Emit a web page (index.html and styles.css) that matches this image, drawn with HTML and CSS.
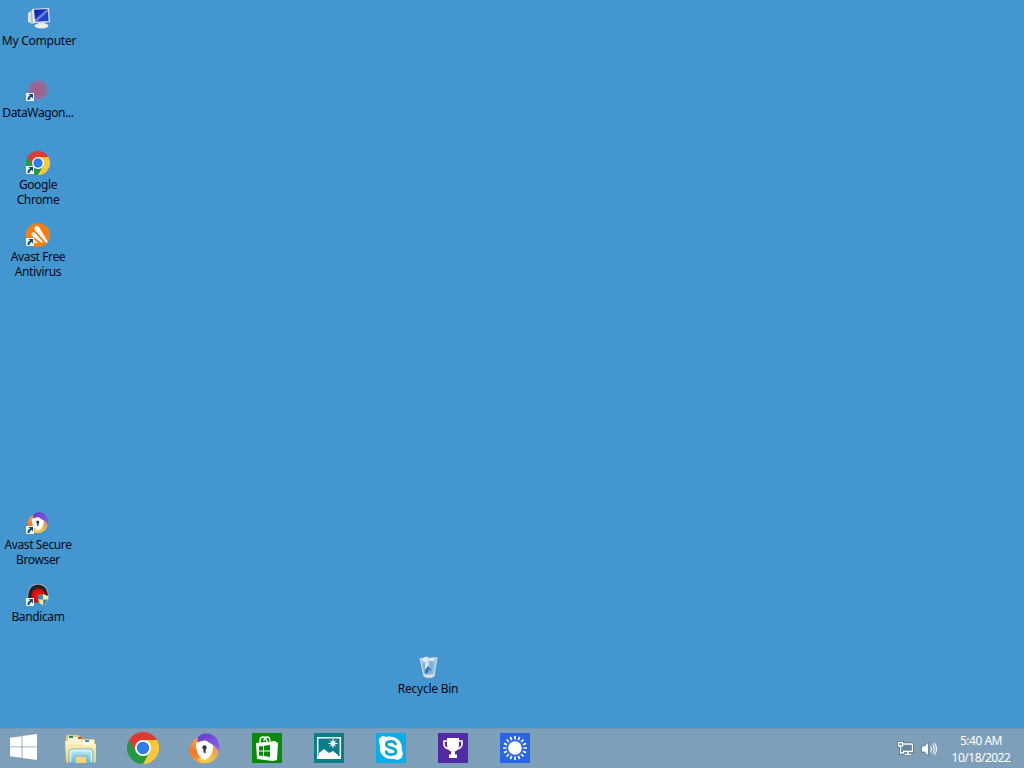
FILE: index.html
```html
<!DOCTYPE html>
<html lang="en">
<head>
<meta charset="utf-8">
<title>Desktop</title>
<link rel="stylesheet" href="styles.css">
</head>
<body>
<svg width="0" height="0" class="defs" aria-hidden="true">
  <defs>
    <linearGradient id="screen" x1="0" y1="0" x2="1" y2="1"><stop offset="0" stop-color="#0d1c98"/><stop offset=".4" stop-color="#1430b8"/><stop offset=".52" stop-color="#7f9ae8"/><stop offset=".6" stop-color="#2343c8"/><stop offset="1" stop-color="#1c3cc4"/></linearGradient>
    <linearGradient id="folder" x1="0" y1="0" x2="0" y2="1"><stop offset="0" stop-color="#fdf3bf"/><stop offset="1" stop-color="#f1cf74"/></linearGradient>
    <linearGradient id="stand" x1="0" y1="0" x2="0" y2="1"><stop offset="0" stop-color="#c9eef8"/><stop offset="1" stop-color="#62b6dc"/></linearGradient>
    <linearGradient id="orange" x1="0" y1="0" x2="0" y2="1"><stop offset="0" stop-color="#ff9c4c"/><stop offset=".6" stop-color="#fa7420"/><stop offset="1" stop-color="#f9a032"/></linearGradient>
    <linearGradient id="yellow" x1="0" y1="1" x2="1" y2="0"><stop offset="0" stop-color="#ffd43c"/><stop offset=".5" stop-color="#f2bb48"/><stop offset="1" stop-color="#d58a68"/></linearGradient>
    <linearGradient id="purple" x1="0" y1="0" x2="1" y2="1"><stop offset="0" stop-color="#643ac8"/><stop offset="1" stop-color="#9060ee"/></linearGradient>
    <radialGradient id="wagon"><stop offset="0" stop-color="#a4608c"/><stop offset=".7" stop-color="#906c9e"/><stop offset="1" stop-color="#7c7fb0" stop-opacity=".35"/></radialGradient>
    <radialGradient id="red"><stop offset="0" stop-color="#ff1c12"/><stop offset="1" stop-color="#c80505"/></radialGradient>
    <symbol id="chrome" viewBox="0 0 48 48">
      <path fill="#e0392f" d="M3.2 12A24 24 0 0 1 44.8 12H24L13.6 30Z"/>
      <path fill="#24983f" d="M3.2 12L13.6 30L24 36H34.4L24 48A24 24 0 0 1 3.2 12Z"/>
      <path fill="#fcc934" d="M44.8 12A24 24 0 0 1 24 48L34.4 30L24 12Z"/>
      <circle cx="24" cy="24" r="12" fill="#fff"/><circle cx="24" cy="24" r="9.3" fill="#2f7de6"/>
    </symbol>
    <symbol id="secure" viewBox="0 0 32 32">
      <path fill="url(#orange)" d="M10 4C2 7-1 17 2 23C5 29 11 32 16 31L12 20Z"/>
      <path fill="url(#yellow)" d="M11 30C21 34 32 27 31 15L24 12L20 24L9 26Z"/>
      <path fill="url(#purple)" d="M9 5C13-1 23-1 28 5C31 9 32 14 31 19C27 11 18 7 9 9Z"/>
      <path fill="#fff" d="M7 10C12 10 14 7 18 8C20 10 23 11 25 13C25 20 22 26 16 28C10 25 7 19 7 10Z"/>
      <circle cx="16" cy="15" r="2.3" fill="#333743"/><path fill="#333743" d="M15 16h2.200v5l-2.200-1z"/>
    </symbol>
    <symbol id="shortcut" viewBox="0 0 8 8">
      <path fill="#f4f7fa" d="M0 0h8v8H0z"/><path fill="#174b83" d="M2.500 1H7v4.400L5.600 4C4.200 4.600 3.700 5.500 3.600 7H1.500C1.400 4.900 2.200 3.500 4 2.500Z"/>
    </symbol>
  </defs>
</svg>
<main class="desktop">
  <div class="item computer">
    <svg viewBox="0 0 24 24"><path fill="#dce1e3" d="M1 6l5-3v14l-5-2z"/><path fill="#a9bdcc" d="M4 3h3v14H4z"/><path fill="#e6e9e8" d="M5 2l17-1 1 14-17 1z"/><path fill="url(#screen)" d="M7 2.800l14-.8.700 12-13.500.8z"/><path fill="#d3d6d2" d="M11 15h7l1 3h-8z"/><ellipse cx="14.500" cy="18.800" rx="7" ry="2.600" fill="#ecece6"/></svg>
    <span>My Computer</span>
  </div>
  <div class="item wagon">
    <svg viewBox="0 0 24 24"><circle cx="12" cy="11" r="10.800" fill="url(#wagon)"/><path d="M5 8q7-6 14 0M5 13q7-6 15 0M9 17q5-4 10-1" fill="none" stroke="#b94c70" stroke-opacity=".35" stroke-width="1.500"/><use href="#shortcut" y="14" width="8" height="8"/></svg>
    <span>DataWagon...</span>
  </div>
  <div class="item google">
    <svg viewBox="0 0 24 24"><use href="#chrome" width="24" height="24"/><use href="#shortcut" y="15" width="8" height="8"/></svg>
    <span>Google<br>Chrome</span>
  </div>
  <div class="item avast">
    <svg viewBox="0 0 24 24"><circle cx="12" cy="12" r="12" fill="#f77f0e"/><path fill="#fff" d="M8.600 4.400C9.800 2.300 12.400 2.500 13.400 4.600L21.200 18c.6 1.500-.4 2.400-1.400 1.300L9.400 7.700C8.500 6.700 8.100 5.400 8.600 4.400ZM5.800 10c1-1.200 2.700-.9 3.800.4l6.800 8c.8 1.200-.1 2-1.300 1.200L6.700 13.400C5.600 12.500 5.200 11 5.800 10ZM4.300 15.700c.8-.7 1.700-.5 2.600.2l4 3.200c.8.9.2 1.400-.7 1.100L5 17.900Z"/><use href="#shortcut" y="15" width="8" height="8"/></svg>
    <span>Avast Free<br>Antivirus</span>
  </div>
  <div class="item browser">
    <svg viewBox="0 0 24 24"><use href="#secure" x="1" y="1" width="21.500" height="21.500"/><use href="#shortcut" y="15" width="8" height="8"/></svg>
    <span>Avast Secure<br>Browser</span>
  </div>
  <div class="item bandicam">
    <svg viewBox="0 0 24 24"><path fill="#d6dce0" d="M2 17C0 5 6 1 12 1s12 4 10 17z"/><path fill="#252528" d="M2.500 18C.5 6 6 1.500 12 1.500s11.500 4.500 9.500 16.500z"/><path fill="url(#red)" d="M6 16C4 9 7.500 5.500 12.500 5.500s8 3.500 6 9l-4 5H7z"/><path fill="#f5e99a" d="M17 11l5 2v4q-1 4-5 5-4-1-5-5v-4z"/><path fill="#4389b6" d="M17 11v5.500h-5V13zM17 16.500h5q-1 4-5 5.500z"/><use href="#shortcut" y="15" width="8" height="8"/></svg>
    <span>Bandicam</span>
  </div>
  <div class="item recycle">
    <svg viewBox="0 0 24 24"><path fill="#a3c6df" fill-opacity=".85" d="M4 3l17-1-3 19q-5 3-10 0z"/><path fill="#dce9f0" d="M5 3.500l6-2 2 2 6-1-1 4-5-1-5 2z"/><path fill="#7fb0d6" d="M7 8h4l-1 10H8zM14 7l3-1-1 12-3 1z"/><path fill="#d6e5ee" d="M9 8l4-2-1 7-3 2z"/><path fill="#3772bd" d="M9 15l3-4 4 5-3-1-1 3-3 1z"/><path d="M4 3l4 18q5 2 10 0l3-19" fill="none" stroke="#d8e7ef"/><path fill="#dbe0db" d="M7.500 19q5 2 11 0l-.5 2.400q-5 3-10 0z"/></svg>
    <span>Recycle Bin</span>
  </div>
</main>
<footer class="taskbar">
  <div class="start"><svg viewBox="0 0 27 26"><path fill="#fff" d="M0 3.800L11.600 2.200V12.400H0zM12.400 2L27 0V12.400H12.400zM0 13.300H11.600V23.800L0 22.200zM12.400 13.300H27V26L12.400 24z"/></svg></div>
  <nav class="apps">
    <svg viewBox="0 0 32 32"><path fill="#e9cc78" d="M1 5l1-2h11l2 2h2l1 2h11l1 2v20H1z"/><path fill="#fffbe7" d="M3 5h13v4H3zM17 8h12v4H17z"/><path fill="#159447" d="M4 4h4v2H4z"/><path fill="#d45328" d="M13 5h4v2h-4z"/><path fill="#3297c7" d="M20 8h4v2h-4z"/><path fill="url(#folder)" d="M0 9h16l2 3h13v17q0 2-2 2H3q-2 0-2-2z"/><path d="M2 11h14l2 2h11" fill="none" stroke="#fffbdc"/><path fill="url(#stand)" stroke="#4fa8d2" stroke-width=".7" d="M4 20q0-3 3-3h18q3 0 3 3v11.500h-6V24H10v7.500H4z"/><path d="M5.500 30V20q0-1.500 2-1.500h17q2 0 2 1.500v10" fill="none" stroke="#def7fd" stroke-width="1.400"/></svg>
    <svg viewBox="0 0 32 32"><use href="#chrome" width="32" height="32"/></svg>
    <svg viewBox="0 0 32 32"><use href="#secure" x="0" y="1" width="31" height="31"/></svg>
    <svg viewBox="0 0 32 32"><path fill="#078a07" d="M1 1h30v30H1z"/><path fill="none" stroke="#fff" stroke-width="1.300" d="M9 11V9q0-4 3-4t4 5M13 9q0-4 3-4t3 4"/><path fill="#fff" d="M5 11l19-2 3 2-1 17-4 1-16-2z"/><path fill="#078a07" d="M8 14.500l4-.6v4.500H8zM13 13.800l6-.7v5.300h-6zM8 19.400h4V24l-4-.5zM13 19.400h6V25l-6-.9z"/></svg>
    <svg viewBox="0 0 32 32"><path fill="#0b7c8c" d="M1 1h30v30H1z"/><path fill="none" stroke="#fff" stroke-width="1.500" d="M4.700 5.700h22.600v20.600H4.700z"/><path fill="#fff" d="M4 27v-3h24v3zM6 24v-3l5-4 5 4 4-2 5 4v2z"/><g stroke="#fff"><path d="M20 7v9M15.500 11.500h9M17 8.500l6 6M23 8.500l-6 6"/></g><circle cx="20" cy="11.500" r="2.400" fill="#fff"/></svg>
    <svg viewBox="0 0 32 32"><path fill="#08aee8" d="M1 1h30v30H1z"/><path fill="#fff" d="M4 10C3 6 7 3 11 5C20 3 28 9 26.800 18C30 24 25 30 19 27C10 28 4 22 5 15Z"/><path d="M20.500 12c-1-2.200-3-2.800-5-2.600-2.700.2-4.200 1.500-4.200 3.200 0 4.500 9.600 2 9.600 6.700 0 4.200-8.400 4.400-9.900.4" fill="none" stroke="#08a5dd" stroke-width="2.700" stroke-linecap="round"/></svg>
    <svg viewBox="0 0 32 32"><path fill="#532ca5" d="M1 1h30v30H1z"/><path fill="#fff" d="M10 6h12v7q0 5-4 6.500v3h2V26h-8v-3.500h2v-3q-4-1.500-4-6.500z"/><path fill="none" stroke="#fff" stroke-width="1.600" d="M10.500 9H7v3q0 4 5 5M21.500 9H25v3q0 4-5 5"/></svg>
    <svg viewBox="0 0 32 32"><path fill="#2865e7" d="M1 1h30v30H1z"/><circle cx="16" cy="16" r="6.800" fill="#fff"/><g stroke="#fff" stroke-width="1.700"><path d="M16 4v3.500M16 24.500V28M4 16h3.500M24.500 16H28M7.500 7.500l2.500 2.500M22 22l2.500 2.500M7.500 24.500L10 22M22 10l2.500-2.500M11.400 4.900l1.300 3.200M19.300 23.900l1.300 3.200M4.900 11.400l3.200 1.300M23.900 19.300l3.200 1.300M4.900 20.600l3.200-1.300M23.900 12.700l3.200-1.300M11.400 27.100l1.300-3.200M19.300 8.100l1.300-3.200"/></g></svg>
  </nav>
  <div class="tray">
    <svg viewBox="0 0 18 18"><g fill="none" stroke="#38556a" stroke-opacity=".75" stroke-width="3"><path d="M7 4H16.500v7.500H7M9 14.500h6M12 11.500v3M4.500 6v7H8M2.500 2.500h4v3.500h-4z"/></g><path d="M7 4H16.500v7.500H7M9 14.500h6M12 11.500v3M4.500 6v7H8M2.500 2.500h4v3.500h-4z" fill="#63849d" stroke="#fff" stroke-width="1.300"/></svg>
    <svg viewBox="0 0 18 18"><path fill="#fff" stroke="#49687e" stroke-width=".7" d="M1.500 6h3l4-4v14l-4-4h-3z"/><path d="M10.500 6.500q2 2.500 0 5M12.500 4.500q3.500 4.500 0 9M14.500 3q4 6 0 12" fill="none" stroke="#fff" stroke-width="1.100"/></svg>
  </div>
  <div class="clock"><span>5:40 AM</span><span>10/18/2022</span></div>
</footer>
</body>
</html>
```
FILE: styles.css
```css
* { box-sizing: border-box; }
body {
  margin: 0;
  width: 1024px;
  height: 768px;
  overflow: hidden;
  display: flex;
  flex-direction: column;
  background: #4496d1;
  font-family: "Noto Sans", "Open Sans", sans-serif;
}
.defs { position: absolute; }
.desktop { position: relative; flex: 1; }
.item {
  position: absolute;
  left: 0;
  width: 76px;
  display: flex;
  flex-direction: column;
  align-items: center;
  color: #030a14;
  font-size: 12px;
  line-height: 15px;
  letter-spacing: -0.38px;
  text-align: center;
  white-space: nowrap;
}
.item svg { width: 24px; height: 24px; margin-bottom: 2px; }
.computer { top: 7px; width: 78px; letter-spacing: -0.25px; }
.wagon { top: 79px; }
.google { top: 151px; }
.avast { top: 223px; }
.browser { top: 511px; }
.bandicam { top: 583px; }
.recycle { top: 655px; left: 390px; letter-spacing: -0.25px; }
.taskbar {
  height: 40px;
  display: flex;
  align-items: center;
  background: #7e9fb9;
  border-top: 1px solid #7099b9;
}
.start { width: 50px; padding: 0 0 3px 10px; }
.start svg { display: block; width: 27px; height: 26px; }
.apps { display: flex; gap: 30px; padding: 0 0 2px 15px; }
.apps svg { width: 32px; height: 32px; }
.tray { display: flex; gap: 6px; margin-left: auto; margin-right: 13px; }
.tray svg { width: 18px; height: 18px; }
.clock {
  width: 60px;
  margin-right: 13px;
  display: flex;
  flex-direction: column;
  align-items: center;
  color: #fff;
  font-size: 12px;
  line-height: 17px;
  letter-spacing: -0.5px;
  white-space: nowrap;
}
```
